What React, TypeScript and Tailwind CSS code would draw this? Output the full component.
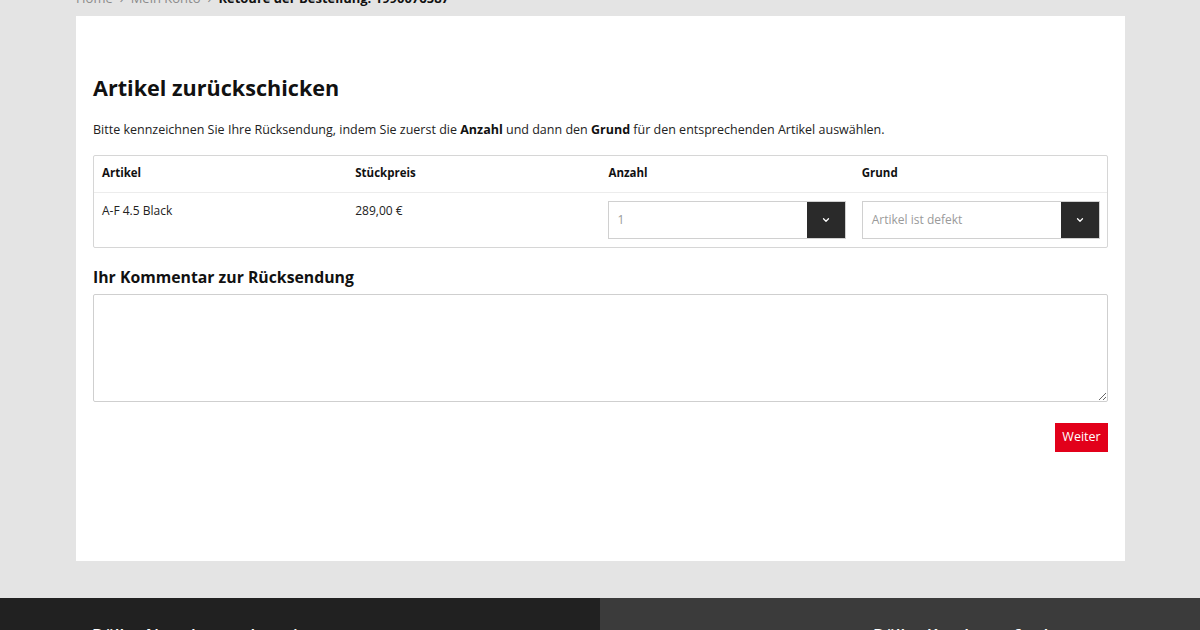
import { ChevronDown } from "lucide-react"

const SelectBox = (props: { value: string }) => {
	return (
		<div className="flex h-[38px] w-[238px] border border-[#d0d0d0] bg-white">
			<div className="flex flex-1 items-center px-[9px] text-[12px] text-[#9a9a9a]">
				{props.value}
			</div>
			<div className="flex w-[38px] items-center justify-center bg-[#2a2a2a]">
				<ChevronDown className="h-[10px] w-[10px] text-white" strokeWidth={3} />
			</div>
		</div>
	)
}

const ReturnTable = () => {
	return (
		<div className="rounded-[2px] border border-[#d6d6d6]">
			<div className="grid h-[37px] grid-cols-4 items-center border-b border-[#ececec] text-[11.5px] font-bold text-[#111]">
				<div className="pl-[8px] pb-[2px]">Artikel</div>
				<div className="pl-[8px] pb-[2px]">Stückpreis</div>
				<div className="pl-[8px] pb-[2px]">Anzahl</div>
				<div className="pl-[8px] pb-[2px]">Grund</div>
			</div>
			<div className="grid h-[54px] grid-cols-4 items-start text-[12px] text-[#222]">
				<div className="pt-[9px] pl-[8px]">A-F 4.5 Black</div>
				<div className="pt-[9px] pl-[8px]">289,00 €</div>
				<div className="pt-[8px] pl-[7px]">
					<SelectBox value="1" />
				</div>
				<div className="pt-[8px] pl-[8px]">
					<SelectBox value="Artikel ist defekt" />
				</div>
			</div>
		</div>
	)
}

export default function App() {
	return (
		<div
			className="flex h-[630px] w-[1200px] flex-col overflow-hidden bg-[#e4e4e4]"
			style={{ fontFamily: '"Open Sans", "Liberation Sans", sans-serif' }}
		>
			<div className="ml-[76px] -mt-[12px] flex h-[28px] shrink-0 items-start gap-[7px] text-[13px] leading-[20px] text-[#8a8a8a]">
				<span>Home</span>
				<span>›</span>
				<span>Mein Konto</span>
				<span>›</span>
				<span className="font-bold text-[#111]">Retoure der Bestellung: 1990076587</span>
			</div>

			<div className="ml-[76px] h-[545px] w-[1049px] shrink-0 bg-white px-[17px] pt-[57px]">
				<h1 className="text-[21.6px] leading-[30px] font-bold text-[#111]">
					Artikel zurückschicken
				</h1>
				<p className="mt-[17px] text-[12.5px] leading-[20px] text-[#222]">
					Bitte kennzeichnen Sie Ihre Rücksendung, indem Sie zuerst die{" "}
					<b className="text-[#111]">Anzahl</b> und dann den{" "}
					<b className="text-[#111]">Grund</b> für den entsprechenden Artikel
					auswählen.
				</p>
				<div className="mt-[15px]">
					<ReturnTable />
				</div>
				<h2 className="mt-[18px] text-[15.8px] leading-[22px] font-bold text-[#111]">
					Ihr Kommentar zur Rücksendung
				</h2>
				<textarea className="mt-[6px] block h-[108px] w-full resize-y rounded-[2px] border border-[#cfcfcf] bg-white p-2 text-[12px] outline-none" />
				<div className="mt-[21px] flex justify-end">
					<button className="h-[29px] w-[53px] bg-[#e2001a] text-[12.5px] text-white">
						Weiter
					</button>
				</div>
			</div>

			<div className="mt-[37px] flex flex-1">
				<div className="w-[600px] bg-[#212121] pt-[24px] pl-[92px] text-[17px] font-semibold text-white">
					Döller Newsletter abonnieren
				</div>
				<div className="w-[600px] bg-[#3b3b3b] pt-[24px] pl-[273px] text-[17px] font-semibold text-white">
					Döller Katalog anfordern
				</div>
			</div>
		</div>
	)
}
